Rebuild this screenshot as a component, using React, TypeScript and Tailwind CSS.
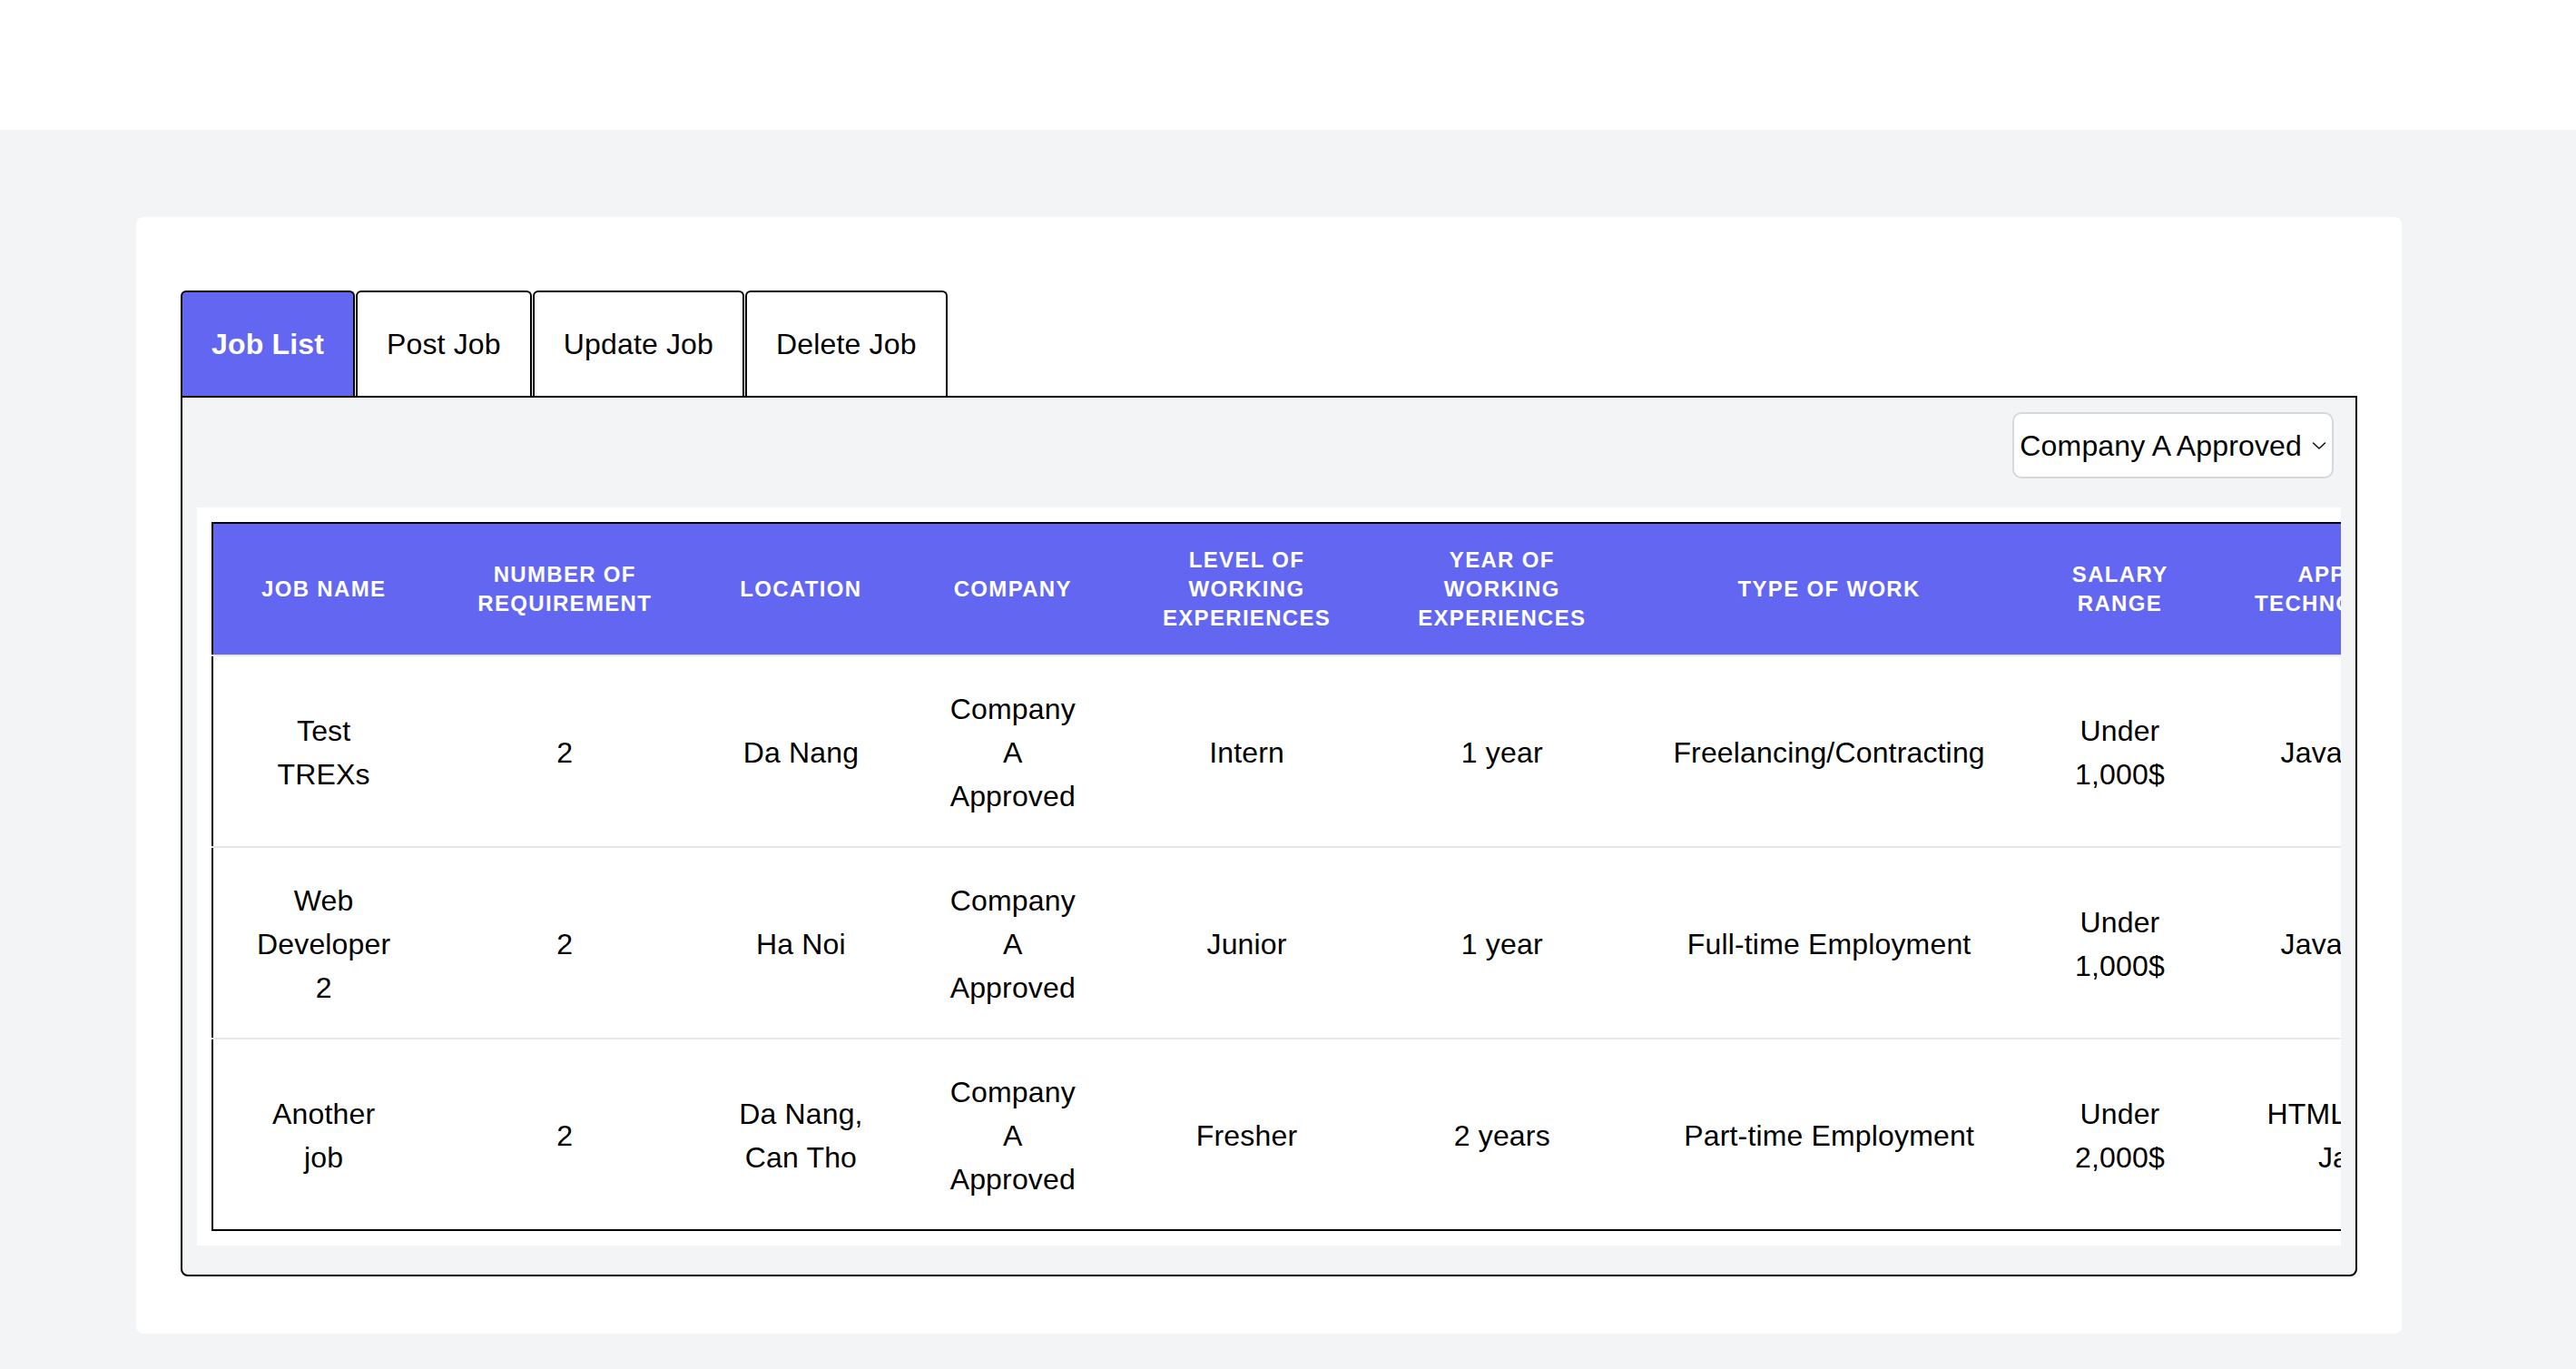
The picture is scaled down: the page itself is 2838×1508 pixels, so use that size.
import { useState } from "react";

const TABS = ["Job List", "Post Job", "Update Job", "Delete Job"];

const COLUMNS = [
  "Job Name",
  "Number of Requirement",
  "Location",
  "Company",
  "Level of Working Experiences",
  "Year of Working Experiences",
  "Type of Work",
  "Salary Range",
  "Applied Technologies",
];

const JOBS = [
  {
    name: "Test TREXs",
    count: 2,
    location: ["Da Nang"],
    company: "Company A Approved",
    level: "Intern",
    years: "1 year",
    type: "Freelancing/Contracting",
    salary: "Under 1,000$",
    tech: "JavaScript",
  },
  {
    name: "Web Developer 2",
    count: 2,
    location: ["Ha Noi"],
    company: "Company A Approved",
    level: "Junior",
    years: "1 year",
    type: "Full-time Employment",
    salary: "Under 1,000$",
    tech: "JavaScript",
  },
  {
    name: "Another job",
    count: 2,
    location: ["Da Nang", "Can Tho"],
    company: "Company A Approved",
    level: "Fresher",
    years: "2 years",
    type: "Part-time Employment",
    salary: "Under 2,000$",
    tech: "HTML, CSS, Java",
  },
];

const td = "px-[48px] pt-[34px] pb-[31px] text-[32px] leading-[48px] tracking-[0.005em]";

export default function App() {
  const [tab, setTab] = useState("Job List");

  return (
    <div className="min-h-[1508px] bg-[#f3f4f6] font-['Liberation_Sans',Arial,sans-serif] text-black">
      <header className="h-[143px] bg-white" />

      <main className="pt-[96px] pl-[150px]">
        <div className="w-[2496px] rounded-[8px] bg-white px-[49px] pt-[81px] pb-[63px]">
          <div className="flex gap-[1px]">
            {TABS.map((t) => {
              const active = t === tab;
              return (
                <button
                  key={t}
                  onClick={() => setTab(t)}
                  className={`rounded-t-[6px] border-2 border-b-0 border-black px-[32px] py-[33px] text-[32px] leading-[48px] tracking-[0.005em] ${
                    active ? "bg-[#6366f1] font-bold text-white" : "bg-white text-black"
                  }`}
                >
                  {t}
                </button>
              );
            })}
          </div>

          <div className="rounded-b-[8px] border-2 border-black bg-[#f3f4f6] p-[16px]">
            <div className="mb-[32px] flex justify-end pr-[8px]">
              <div className="flex h-[73px] items-center gap-[11px] rounded-[10px] border-2 border-[#d6d8dc] bg-white pl-[6px] pr-[6px] text-[32px] tracking-[0.005em]">
                <span>Company A Approved</span>
                <svg width="16" height="10" viewBox="0 0 16 10" fill="none">
                  <path d="M1.5 2 L8 8 L14.5 2" stroke="#111" strokeWidth="1.6" strokeLinecap="round" strokeLinejoin="round" />
                </svg>
              </div>
            </div>

            <div className="mb-[16px] overflow-x-auto bg-white p-[16px] [scrollbar-width:none]">
              <table className="border-2 border-black text-center">
                <thead className="bg-[#6366f1]">
                  <tr>
                    {COLUMNS.map((c) => (
                      <th
                        key={c}
                        className="px-[48px] py-[24px] text-[24px] font-bold uppercase leading-[32px] tracking-[0.055em] text-white"
                      >
                        {c}
                      </th>
                    ))}
                  </tr>
                </thead>
                <tbody>
                  {JOBS.map((j) => (
                    <tr key={j.name} className="border-t-2 border-[#e5e7eb]">
                      <td className={td}>{j.name}</td>
                      <td className={td}>{j.count}</td>
                      <td className={td}>
                        {j.location.map((l, i) => (
                          <span key={l}>
                            <span className="whitespace-nowrap">
                              {l}
                              {i < j.location.length - 1 ? "," : ""}
                            </span>{" "}
                          </span>
                        ))}
                      </td>
                      <td className={td}>{j.company}</td>
                      <td className={td}>{j.level}</td>
                      <td className={td}>{j.years}</td>
                      <td className={td}>{j.type}</td>
                      <td className={td}>{j.salary}</td>
                      <td className={td}>{j.tech}</td>
                    </tr>
                  ))}
                </tbody>
              </table>
            </div>
          </div>
        </div>
      </main>
    </div>
  );
}
